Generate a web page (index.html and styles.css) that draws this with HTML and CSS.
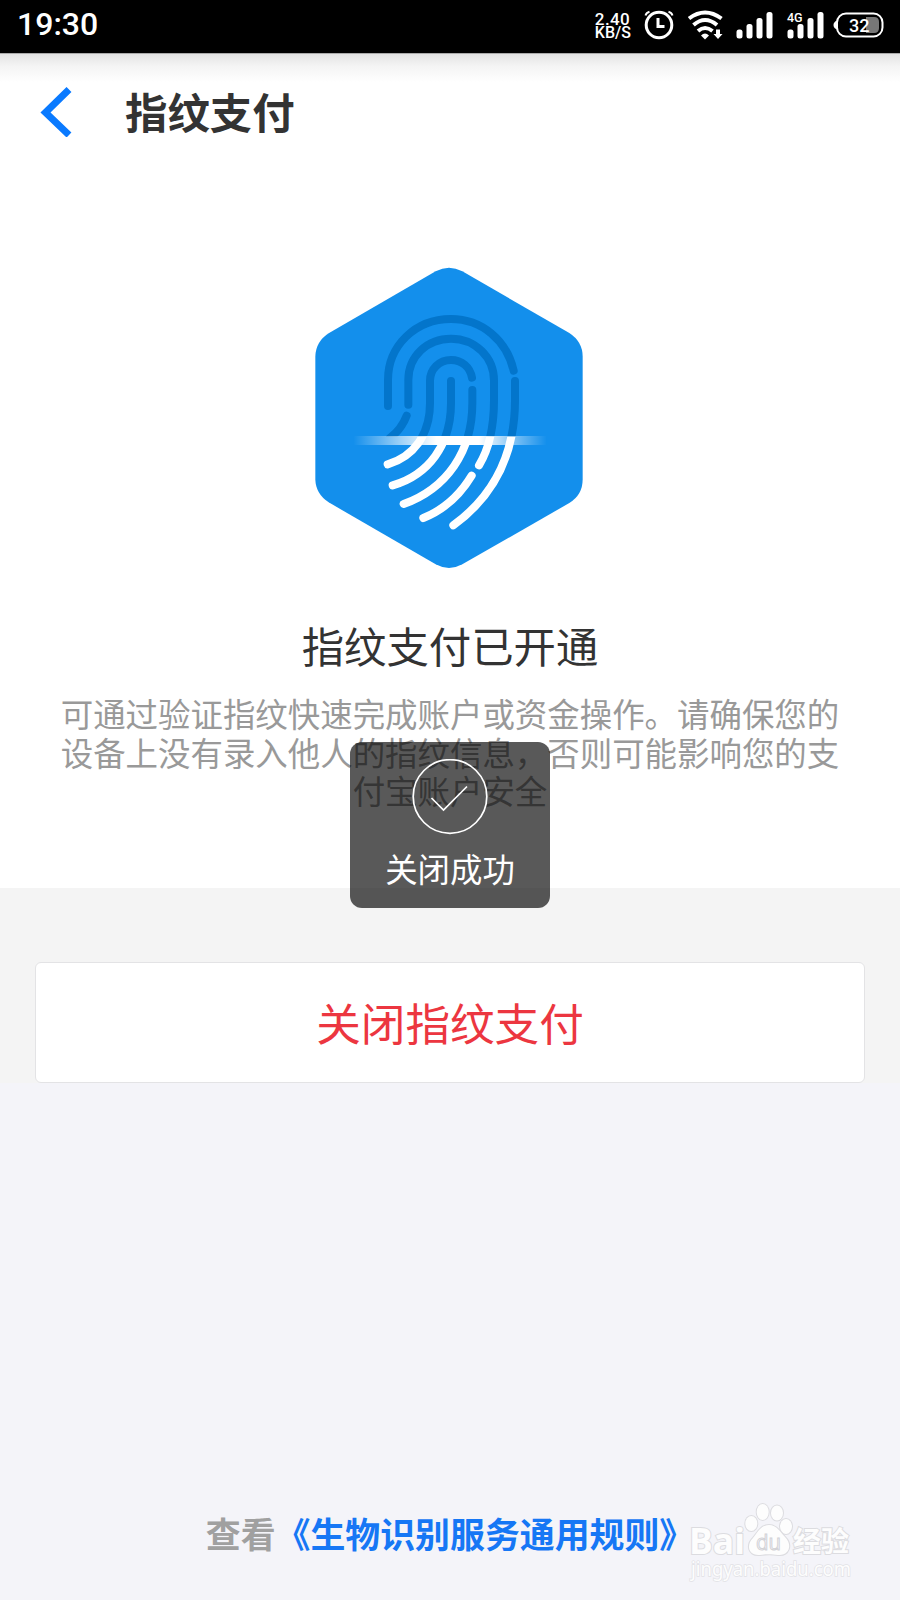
FILE: index.html
```html
<!DOCTYPE html>
<html lang="zh-CN">
<head>
    <meta charset="UTF-8">
    <meta name="viewport" content="width=device-width, initial-scale=1.0">
    <title>指纹支付</title>
    <link rel="stylesheet" href="styles.css">
</head>
<body>
    <!-- Status bar -->
    <div class="status-bar">
        <span class="time">19:30</span>
        <div class="net-speed"><span class="rate">2.40</span><span>KB/S</span></div>
        <svg class="status-icons" viewBox="640 0 250 53" width="250" height="53">
            <g fill="none" stroke="#fff" stroke-width="3">
                <circle cx="659" cy="25" r="12.8"/>
                <path d="M658 18v8.500h6.500"/>
                <path d="M645.500 15.500q1-3 4-3.800M672.500 15.500q-1-3-4-3.800" stroke-width="2"/>
            </g>
            <g fill="none" stroke="#fff" stroke-width="4">
                <path d="M689 18.500Q705 6.500 721.500 18.500"/>
                <path d="M693.500 25Q705 15 717 25"/>
                <path d="M698 31Q705 25 712.500 31"/>
            </g>
            <path d="M701 35.500Q705 31.500 709 35.500L705 39.500z" fill="#fff"/>
            <path d="M716 29.500h4v4.500h2.500L718 39l-4.500-5h2.500z" fill="#fff"/>
            <g fill="#fff">
                <rect x="736.500" y="29.500" width="6" height="9" rx="2.500"/>
                <rect x="746.500" y="24" width="6" height="14.500" rx="2.500"/>
                <rect x="756.500" y="18" width="6" height="20.500" rx="2.500"/>
                <rect x="766.500" y="12" width="6" height="26.500" rx="2.500"/>
                <rect x="787.500" y="29.500" width="6" height="9" rx="2.500"/>
                <rect x="797.500" y="24" width="6" height="14.500" rx="2.500"/>
                <rect x="807.500" y="18" width="6" height="20.500" rx="2.500"/>
                <rect x="817.500" y="12" width="6" height="26.500" rx="2.500"/>
            </g>
            <text x="787" y="21.500" font-size="12.500" class="status-text">4G</text>
            <path d="M866 17h8q5 0 5 5v6q0 5-5 5h-8z" fill="#777"/>
            <rect x="837" y="13.500" width="45.500" height="23" rx="9" fill="none" stroke="#fff" stroke-width="2"/>
            <path d="M837 20.500q-3.500 1.500-3.500 4.500t3.500 4.500z" fill="#fff"/>
            <text x="849" y="31.500" font-size="18" class="status-text">32</text>
        </svg>
    </div>

    <!-- Title bar -->
    <header class="header">
        <svg class="back" viewBox="0 0 32 50" width="32" height="50">
            <path d="M29 2.500L5.500 25.500L29 48" fill="none" stroke="#0a7aff" stroke-width="7"/>
        </svg>
        <h1>指纹支付</h1>
    </header>

    <!-- Fingerprint status -->
    <main class="content">
        <svg class="fingerprint" viewBox="0 0 900 990" width="300" height="330">
            <defs>
                <clipPath id="above"><rect width="900" height="560"/></clipPath>
                <clipPath id="below"><rect y="560" width="900" height="430"/></clipPath>
                <linearGradient id="scan">
                    <stop offset="0" stop-color="#fff" stop-opacity="0"/>
                    <stop offset=".25" stop-color="#fff" stop-opacity=".6"/>
                    <stop offset=".43" stop-color="#fff"/>
                    <stop offset=".65" stop-color="#fff"/>
                    <stop offset=".85" stop-color="#fff" stop-opacity=".4"/>
                    <stop offset="1" stop-color="#fff" stop-opacity="0"/>
                </linearGradient>
                <g id="ridges" fill="none" stroke-width="24" stroke-linecap="round">
                    <path d="M264 468V390C264 288 345 207 453 207C545 207 620 270 641 362"/>
                    <path d="M325 464V390C325 318 382 266 453 266C526 266 582 322 582 392V450C582 530 568 595 537 646"/>
                    <path d="M516 383C510 350 485 330 453 330C417 330 390 358 390 392V460C390 555 340 620 263 643"/>
                    <path d="M453 393V460C453 585 385 675 278 706"/>
                    <path d="M517 420V460C517 605 440 715 311 762"/>
                    <path d="M645 393V450C645 610 585 735 460 826"/>
                    <path d="M515 677C480 735 430 780 370 804"/>
                </g>
            </defs>
            <path fill="#138fec" d="M407 64Q447 42 487 64L808 249Q848 275 848 320V688Q848 735 808 759L487 943Q447 965 407 943L86 757Q47 732 46 688V320Q47 275 86 250Z"/>
            <use href="#ridges" stroke="#0375cb" clip-path="url(#above)"/>
            <path d="M320 497Q305 537 270 564" fill="none" stroke="#0375cb" stroke-width="24" stroke-linecap="round" clip-path="url(#above)"/>
            <use href="#ridges" stroke="#fff" clip-path="url(#below)"/>
            <rect x="160" y="558" width="580" height="27" fill="url(#scan)"/>
        </svg>
        <h2>指纹支付已开通</h2>
        <p>可通过验证指纹快速完成账户或资金操作。请确保您的<br>设备上没有录入他人的指纹信息，否则可能影响您的支<br>付宝账户安全</p>
    </main>

    <div class="action">
        <button class="close-btn">关闭指纹支付</button>
    </div>

    <footer class="footer">查看<a>《生物识别服务通用规则》</a></footer>

    <!-- Toast -->
    <div class="toast">
        <svg viewBox="0 0 76 76" width="76" height="76" fill="none" stroke="#fff" stroke-width="1.700">
            <circle cx="38" cy="37.500" r="36.800"/>
            <path d="M19.500 39L31.500 51L55 27.500"/>
        </svg>
        <span>关闭成功</span>
    </div>

    <!-- Watermark -->
    <svg class="watermark" viewBox="0 0 180 90" width="180" height="90">
        <g fill="#fdfdfd" stroke="#dcdce0" stroke-width="2" paint-order="stroke">
            <text x="9" y="52.500" class="wm-logo" textLength="56" lengthAdjust="spacingAndGlyphs">Bai</text>
            <ellipse cx="71.300" cy="22.500" rx="6" ry="7.500"/>
            <ellipse cx="82.700" cy="11" rx="6" ry="8"/>
            <ellipse cx="97" cy="12" rx="6" ry="7.500"/>
            <ellipse cx="106" cy="25.500" rx="6" ry="7.500"/>
            <path d="M89 24C97 24 100 31 105 36C113 44 109 55 98 54C91 53 87 53 80 54C68 55 66 44 73 37C78 31 81 24 89 24Z"/>
            <text x="113" y="51" class="wm-cn" textLength="56" lengthAdjust="spacingAndGlyphs">经验</text>
        </g>
        <text x="11" y="74.500" class="wm-url" textLength="160" lengthAdjust="spacingAndGlyphs">jingyan.baidu.com</text>
        <text x="76" y="49" class="wm-du" textLength="25" lengthAdjust="spacingAndGlyphs">du</text>
    </svg>
</body>
</html>
```
FILE: styles.css
```css
* {
    box-sizing: border-box;
}
body {
    margin: 0;
    height: 1600px;
    display: flex;
    flex-direction: column;
    position: relative;
    overflow: hidden;
    background-color: #f4f4f9;
    font-family: "Noto Sans CJK SC", sans-serif;
}
h1, h2, p {
    margin: 0;
}
.status-bar {
    height: 53px;
    display: flex;
    align-items: center;
    padding: 0 10px 0 17px;
    background-color: #000;
    color: #fff;
    font-family: Roboto, sans-serif;
}
.time {
    font-size: 32px;
    font-weight: 500;
    line-height: 49px;
    margin-bottom: 4px;
}
.net-speed {
    display: flex;
    flex-direction: column;
    margin-left: auto;
    margin-right: 9px;
    margin-bottom: 2px;
    font-size: 16px;
    font-weight: 500;
    line-height: 14px;
}
.rate {
    font-size: 17px;
    letter-spacing: 0.4px;
}
.status-text {
    fill: #fff;
    font-family: Roboto, sans-serif;
    font-weight: 500;
}
.header {
    height: 117px;
    display: flex;
    align-items: center;
    padding: 0 0 0 40px;
    background: linear-gradient(#e3e3e3, #f4f4f4 12px, #fff 28px);
    border-top: 1px solid #aaa;
}
.header h1 {
    margin-left: 53px;
    margin-bottom: 2px;
    font-size: 42.4px;
    line-height: 60px;
    font-weight: 700;
    color: #333;
}
.content {
    height: 718px;
    display: flex;
    flex-direction: column;
    align-items: center;
    padding-top: 80px;
    background-color: #fff;
}
.content h2 {
    margin-top: 34px;
    font-size: 42.4px;
    line-height: 62px;
    font-weight: 400;
    color: #333;
}
.content p {
    margin-top: 18px;
    font-size: 32.45px;
    line-height: 38.5px;
    text-align: center;
    white-space: nowrap;
    color: #999;
}
.action {
    padding: 74px 35px 0;
    background-color: #f4f4f4;
}
.close-btn {
    display: block;
    width: 100%;
    height: 121px;
    padding: 0 0 3px;
    border: 1px solid #e3e3e5;
    border-radius: 6px;
    background-color: #fff;
    font-family: inherit;
    font-size: 44.6px;
    color: #ec3640;
}
.footer {
    margin-top: auto;
    padding-bottom: 42px;
    text-align: center;
    font-size: 34.9px;
    line-height: 50px;
    font-weight: 700;
    color: #a0a0a0;
}
.footer a {
    color: #1677f5;
}
.toast {
    position: absolute;
    left: 350px;
    top: 742px;
    width: 200px;
    height: 166px;
    padding-top: 17px;
    display: flex;
    flex-direction: column;
    align-items: center;
    border-radius: 12px;
    background-color: rgba(0, 0, 0, 0.65);
    color: #fff;
    font-size: 32.4px;
    line-height: 48px;
}
.toast span {
    margin-top: 9px;
}
.watermark {
    position: absolute;
    right: 40px;
    bottom: 9px;
}
.wm-logo {
    font-family: "Open Sans", sans-serif;
    font-size: 36px;
    font-weight: 700;
}
.wm-cn {
    font-size: 28px;
    font-weight: 700;
}
.wm-url {
    font-family: "Noto Sans", sans-serif;
    font-size: 19px;
    fill: #fdfdfd;
    stroke: #e2e2e6;
    stroke-width: 1.5;
    paint-order: stroke;
}
.wm-du {
    font-family: "Open Sans", sans-serif;
    font-size: 22px;
    fill: #f4f4f9;
    stroke: #d2d2d6;
    stroke-width: 1;
}
```
